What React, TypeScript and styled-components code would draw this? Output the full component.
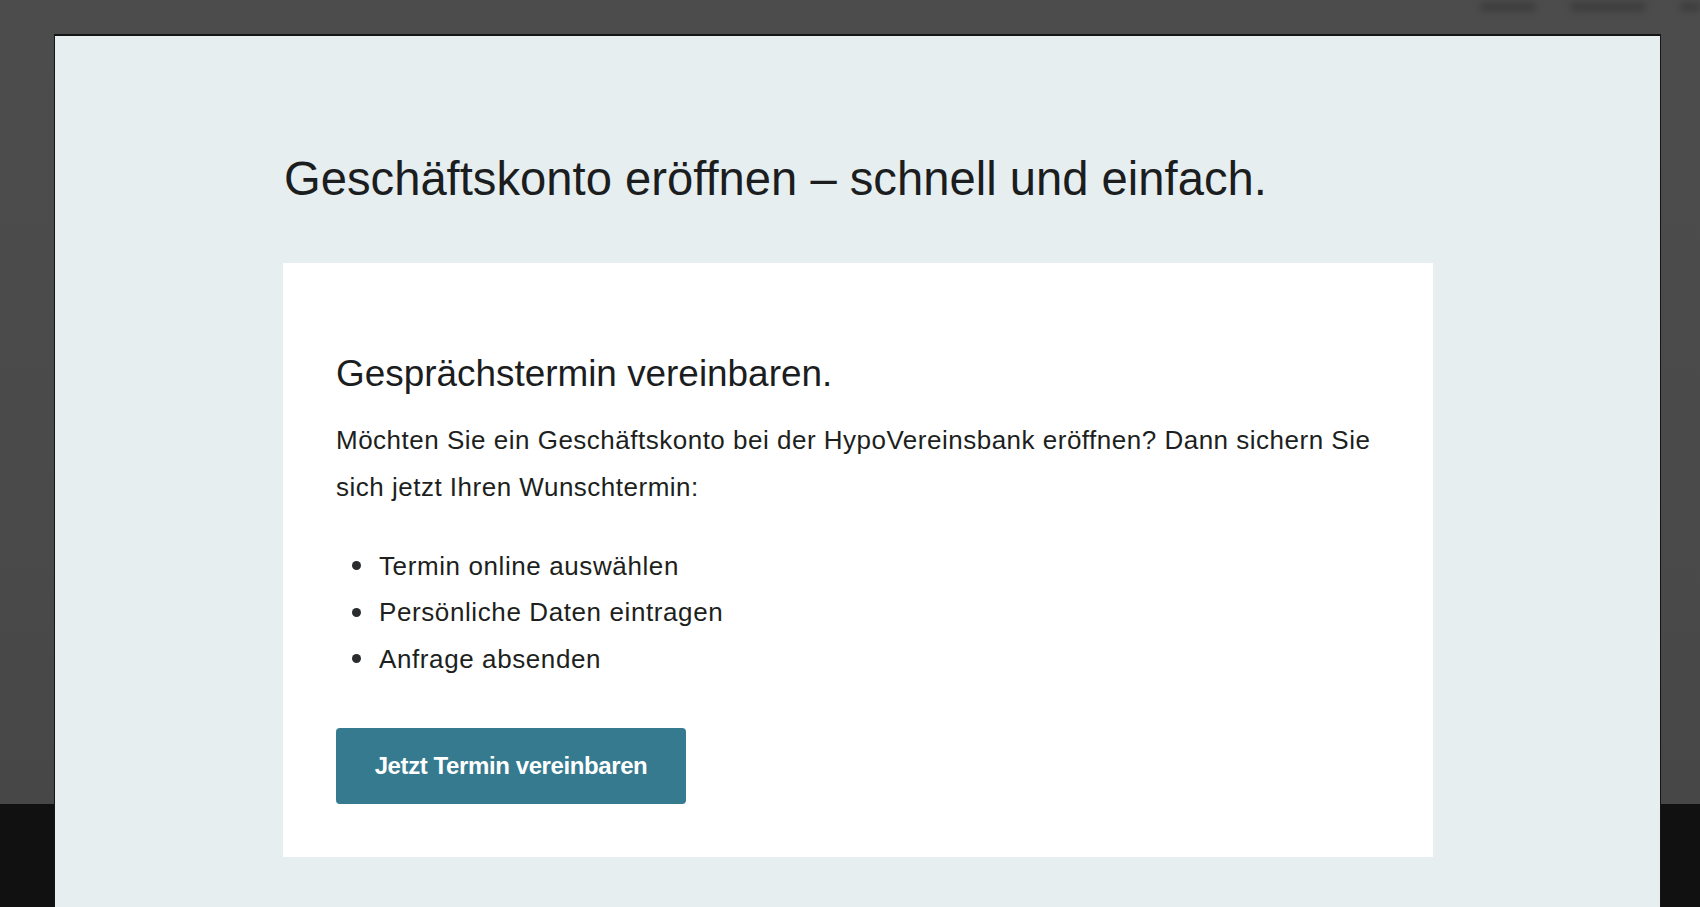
import React from "react";
import styled, { createGlobalStyle } from "styled-components";

const GlobalStyle = createGlobalStyle`
  html, body {
    margin: 0;
    padding: 0;
    width: 1700px;
    height: 907px;
    overflow: hidden;
    background: #4c4c4c;
  }
  * { box-sizing: border-box; }
`;

const Page = styled.div`
  position: relative;
  width: 1700px;
  height: 907px;
  display: flex;
  flex-direction: column;
  background: #4c4c4c;
  font-family: "Liberation Sans", Arial, sans-serif;
`;

const PageTop = styled.div`
  height: 36px;
  display: flex;
  justify-content: flex-end;
  align-items: flex-start;
  gap: 34px;
`;

const BlurItem = styled.span<{ $w: number }>`
  display: block;
  width: ${(p) => p.$w}px;
  height: 10px;
  margin-top: 2px;
  background: #3f3f3f;
  filter: blur(3px);
  border-radius: 4px;
`;

const PageBody = styled.div`
  flex: 1;
  background: linear-gradient(180deg, #4c4c4c 0%, #4a4a4a 60%, #474747 100%);
`;

const PageFooter = styled.div`
  height: 103px;
  background: #111111;
`;

const Modal = styled.section`
  position: absolute;
  top: 36px;
  left: 55px;
  width: 1605px;
  bottom: 0;
  background: #e6eef0;
  box-shadow: 0 -1px 0 1px #151515;
  padding: 115px 0 0 228px;
  color: #1c1c1c;
`;

const Title = styled.h1`
  margin: 0;
  padding-left: 1px;
  font-family: "Liberation Sans", Arial, sans-serif;
  font-weight: 400;
  font-size: 47.2px;
  line-height: 56px;
  color: #1b1d1e;
`;

const Card = styled.div`
  margin-top: 56px;
  width: 1150px;
  background: #ffffff;
  padding: 89px 54px 53px 53px;
`;

const CardHeading = styled.h2`
  margin: 0;
  font-family: "Liberation Sans", Arial, sans-serif;
  font-weight: 400;
  font-size: 36.9px;
  line-height: 44.4px;
  color: #1b1d1e;
`;

const Paragraph = styled.p`
  margin: 20.7px 0 0 0;
  font-size: 26px;
  letter-spacing: 0.5px;
  line-height: 46.5px;
  color: #1d1f20;
`;

const List = styled.ul`
  margin: 32.6px 0 0 0;
  padding-left: 43px;
  list-style: none;
  font-size: 26px;
  letter-spacing: 0.6px;
  line-height: 46.5px;
  color: #1d1f20;
`;

const ListItem = styled.li`
  display: flex;
  align-items: center;
  &::before {
    content: "";
    flex: none;
    width: 9px;
    height: 9px;
    border-radius: 50%;
    background: #2a2c2d;
    margin-left: -27px;
    margin-right: 18px;
  }
`;

const Button = styled.button`
  margin-top: 46px;
  width: 350px;
  height: 76px;
  border: none;
  border-radius: 4px;
  background: #357a8e;
  color: #ffffff;
  font-family: "Liberation Sans", Arial, sans-serif;
  font-weight: 700;
  font-size: 24px;
  letter-spacing: -0.4px;
  cursor: pointer;
  display: flex;
  align-items: center;
  justify-content: center;
`;

export default function App() {
  return (
    <>
      <GlobalStyle />
      <Page>
        <PageTop>
          <BlurItem $w={56} />
          <BlurItem $w={76} />
          <BlurItem $w={20} />
        </PageTop>
        <PageBody />
        <PageFooter />
        <Modal>
          <Title>Geschäftskonto eröffnen – schnell und einfach.</Title>
          <Card>
            <CardHeading>Gesprächstermin vereinbaren.</CardHeading>
            <Paragraph>
              Möchten Sie ein Geschäftskonto bei der HypoVereinsbank eröffnen? Dann sichern Sie
              <br />
              sich jetzt Ihren Wunschtermin:
            </Paragraph>
            <List>
              <ListItem>Termin online auswählen</ListItem>
              <ListItem>Persönliche Daten eintragen</ListItem>
              <ListItem>Anfrage absenden</ListItem>
            </List>
            <Button>Jetzt Termin vereinbaren</Button>
          </Card>
        </Modal>
      </Page>
    </>
  );
}
